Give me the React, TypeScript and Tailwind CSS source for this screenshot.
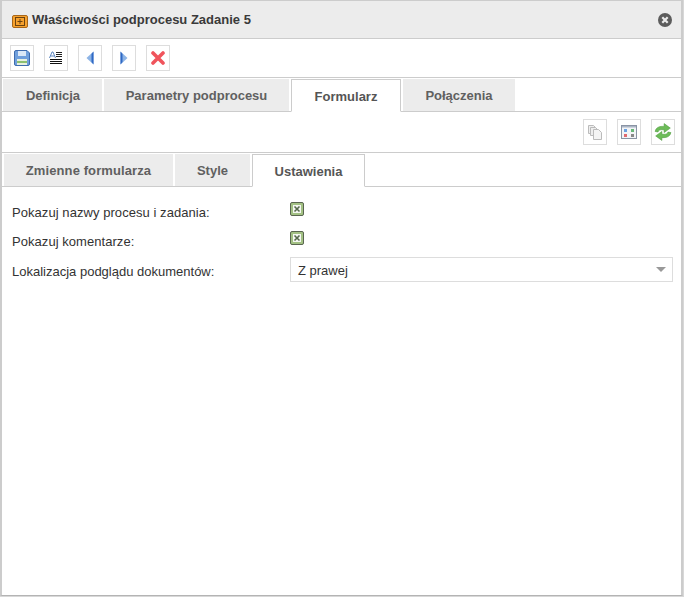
import React from 'react';

const ToolButton: React.FC<{ children: React.ReactNode }> = ({ children }) => (
    <div className="w-6 h-[26px] border border-[#dddddd] bg-white flex items-center justify-center">{children}</div>
);

const Tab: React.FC<{ label: string; width: string; active?: boolean; spread?: boolean; nudge?: boolean }> = ({ label, width, active, spread, nudge }) => (
    <div
        className={
            active
                ? `${width} h-[33px] -mb-px bg-white border border-[#cccccc] border-b-white flex items-center justify-center text-[13px] font-bold text-[#555555] pt-[2px]`
                : `${width} h-[32px] bg-[#ececec] flex items-center justify-center text-[13px] font-bold text-[#606060] pt-[1px] ${nudge ? 'pl-[1px]' : ''} ${spread ? 'tracking-[0.1px]' : ''}`
        }
    >
        {label}
    </div>
);

const CheckBox: React.FC = () => (
    <div className="w-[14px] h-[14px] rounded-[2px] border border-[#5a6650] bg-[#a3c184] flex items-center justify-center">
        <svg width="8" height="8" viewBox="0 0 8 8">
            <rect width="8" height="8" fill="#f4f7f1" />
            <path d="M1.500 1.500l5 5M6.500 1.500l-5 5" stroke="#56684c" strokeWidth="1.600" />
        </svg>
    </div>
);

const App: React.FC = () => {
    return (
        <div className="w-[684px] h-[597px] bg-[#d8d8d8] pr-[1px] pb-[1px] font-['Liberation_Sans',sans-serif]">
            <div className="h-[596px] bg-white border-l-2 border-r-2 border-t border-b border-l-[#cccccc] border-r-[#cccccc] border-t-[#cccccc] border-b-[#b4b4b4] flex flex-col">
                {/* title */}
                <div className="h-[37px] bg-[#ececec] border-b border-[#cccccc] box-content flex items-center pl-[10px] pr-[9px] shrink-0">
                    <svg width="16" height="13" viewBox="0 0 16 13" className="mr-[4px] mt-[3px]">
                        <rect x="0.5" y="0.5" width="15" height="12" rx="1.500" fill="#f7a22e" stroke="#a8671a" />
                        <rect x="3.500" y="2.500" width="9" height="8" fill="none" stroke="#6b4210" />
                        <path d="M8 4v5M5.500 6.500h5" stroke="#6b4210" />
                    </svg>
                    <span className="text-[13px] font-bold text-[#3a3a3a] flex-1">Właściwości podprocesu Zadanie 5</span>
                    <svg width="14" height="14" viewBox="0 0 14 14">
                        <circle cx="7" cy="7" r="7" fill="#5c5c5c" />
                        <path d="M4.300 4.300l5.400 5.400M9.700 4.300l-5.400 5.400" stroke="#ececec" strokeWidth="2.200" />
                    </svg>
                </div>

                {/* main toolbar */}
                <div className="h-[38px] border-b border-[#cccccc] box-content flex items-center gap-[10px] pl-[8px] shrink-0">
                    <ToolButton>
                        <svg width="16" height="16" viewBox="0 0 16 16">
                            <path d="M0.500 2a1.500 1.500 0 0 1 1.500-1.500h11l2.500 2.500v11a1.500 1.500 0 0 1-1.500 1.500H2a1.500 1.500 0 0 1-1.500-1.500z" fill="#6f9fdc" stroke="#3f6cae" />
                            <rect x="4" y="1" width="8" height="5" fill="#dbe8f7" />
                            <rect x="3" y="9" width="10" height="6" fill="#e8f0e0" />
                            <rect x="3" y="11" width="10" height="2" fill="#8cc070" />
                        </svg>
                    </ToolButton>
                    <ToolButton>
                        <svg width="14" height="14" viewBox="0 0 14 14">
                            <path d="M0.500 7L3 1h1l2.500 6M1.500 5h4" fill="none" stroke="#5d86c0" />
                            <path d="M7 1.500h6M7 3.500h6M7 5.500h6" stroke="#222222" />
                            <path d="M1 8.500h12M1 10.500h12M1 12.500h12" stroke="#111111" />
                        </svg>
                    </ToolButton>
                    <ToolButton>
                        <svg width="8" height="14" viewBox="0 0 8 14">
                            <path d="M7.500 0.500v13L0.500 7z" fill="#8db4e6" />
                            <path d="M7.500 0.500v13L5.500 11V3z" fill="#2f68c4" />
                        </svg>
                    </ToolButton>
                    <ToolButton>
                        <svg width="8" height="14" viewBox="0 0 8 14">
                            <path d="M0.500 0.500v13L7.500 7z" fill="#8db4e6" />
                            <path d="M0.500 0.500v13L2.500 11V3z" fill="#2f68c4" />
                        </svg>
                    </ToolButton>
                    <ToolButton>
                        <svg width="14" height="14" viewBox="0 0 14 14">
                            <path d="M2 2l10 10M12 2L2 12" stroke="#f0545c" strokeWidth="3.600" strokeLinecap="round" />
                        </svg>
                    </ToolButton>
                </div>

                {/* tabs */}
                <div className="h-[33px] border-b border-[#cccccc] box-content flex items-end gap-[2px] pl-[1px] shrink-0">
                    <Tab label="Definicja" width="w-[99px]" nudge />
                    <Tab label="Parametry podprocesu" width="w-[185px]" />
                    <Tab label="Formularz" width="w-[110px]" active />
                    <Tab label="Połączenia" width="w-[112px]" />
                </div>

                {/* form toolbar */}
                <div className="h-[40px] border-b border-[#cccccc] box-content flex items-center justify-end gap-[10px] pr-[6px] shrink-0">
                    <ToolButton>
                        <svg width="16" height="16" viewBox="0 0 16 16">
                            <path d="M1.500 1.500h5l2 2v6h-7z" fill="#eeeeee" stroke="#bbbbbb" />
                            <path d="M3.500 3.500h5l2 2v6h-7z" fill="#eeeeee" stroke="#bbbbbb" />
                            <path d="M6.500 5.500h5l3 3v7h-8z" fill="#f4f4f4" stroke="#bbbbbb" />
                        </svg>
                    </ToolButton>
                    <ToolButton>
                        <svg width="16" height="14" viewBox="0 0 16 14">
                            <rect x="0.500" y="0.500" width="15" height="13" fill="#f2f4f7" stroke="#8a94a4" />
                            <rect x="1" y="1" width="14" height="1.500" fill="#aab4c4" />
                            <rect x="3" y="4" width="3" height="3" fill="#6aa0e0" />
                            <rect x="10" y="4" width="3" height="3" fill="#68b878" />
                            <rect x="3" y="9" width="3" height="3" fill="#e06a70" />
                            <rect x="10" y="9" width="3" height="3" fill="#888888" />
                        </svg>
                    </ToolButton>
                    <ToolButton>
                        <svg width="18" height="18" viewBox="0 0 16 16">
                            <path d="M1 7.500c.5-3 3-4.500 6-4.500h2V0.500L14.500 4.500 9 8.500V6H7C5 6 4 6.500 3.500 8z" fill="#6cbc58" stroke="#4c9a3c" strokeWidth="0.500" />
                            <path d="M15 8.500c-.5 3-3 4.500-6 4.500H7v2.500L1.500 11.500 7 7.500V10h2c2 0 3-.5 3.500-2z" fill="#6cbc58" stroke="#4c9a3c" strokeWidth="0.500" />
                        </svg>
                    </ToolButton>
                </div>

                {/* inner tabs */}
                <div className="h-[33px] border-b border-[#cccccc] box-content flex items-end gap-[2px] pl-[2px] shrink-0">
                    <Tab label="Zmienne formularza" width="w-[169px]" spread />
                    <Tab label="Style" width="w-[75px]" />
                    <Tab label="Ustawienia" width="w-[113px]" active />
                </div>

                {/* settings form */}
                <div className="flex-1 pl-[10px] pr-[8px] text-[13px] text-[#333333]">
                    <div className="grid grid-cols-[278px_1fr] grid-rows-[29px_29px_auto] items-start">
                        <div className="pt-[18px] leading-[15px] tracking-[0.06px]">Pokazuj nazwy procesu i zadania:</div>
                        <div className="pt-[15px]"><CheckBox /></div>
                        <div className="pt-[18px] leading-[15px] tracking-[0.05px]">Pokazuj komentarze:</div>
                        <div className="pt-[15px]"><CheckBox /></div>
                        <div className="pt-[19px] leading-[15px]">Lokalizacja podglądu dokumentów:</div>
                        <div className="mt-[12px] h-[25px] border border-[#dddddd] flex items-center justify-between pl-[7px] pr-[6px]">
                            <span className="pt-[2px]">Z prawej</span>
                            <div className="w-0 h-0 border-l-[5px] border-r-[5px] border-t-[5px] border-l-transparent border-r-transparent border-t-[#999999]" />
                        </div>
                    </div>
                </div>
            </div>
        </div>
    );
};

export default App;
